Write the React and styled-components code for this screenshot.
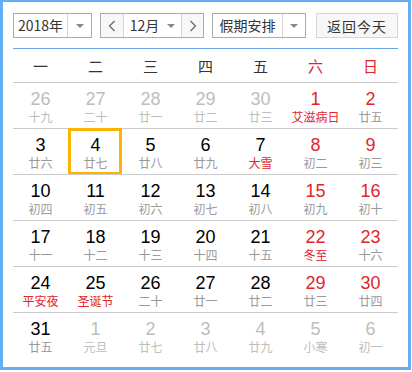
import styled, { createGlobalStyle } from 'styled-components'

const Global = createGlobalStyle`
  body { margin: 0; background: #fff; }
  * { box-sizing: border-box; }
`

const Frame = styled.div`
  width: 411px;
  height: 370px;
  border: 3px solid #65aef5;
  border-top-width: 2px;
  padding: 11px 10px 0 10px;
  font-family: "Liberation Sans", "Noto Sans CJK SC", sans-serif;
  background: #fff;
`

const Toolbar = styled.div`
  display: flex;
  align-items: center;
  height: 25px;
  font-family: "Noto Sans CJK SC", sans-serif;
  font-size: 14px;
  color: #333;
`

const Box = styled.div`
  display: flex;
  height: 25px;
  width: ${p => p.$w}px;
  margin-left: ${p => p.$ml || 0}px;
  border: 1px solid #aaa;
  background: #fff;
`

const Label = styled.div`
  flex: 1;
  display: flex;
  align-items: center;
  justify-content: center;
  gap: 8px;
  line-height: 23px;
`

const ArrowCell = styled.div`
  width: ${p => p.$w}px;
  display: flex;
  align-items: center;
  justify-content: center;
  border-left: 1px solid #d4d4d4;
  border-right: ${p => (p.$edge ? '1px solid #d4d4d4' : 'none')};
  background: ${p => (p.$shade ? '#f7f7f7' : '#fff')};
`

const Caret = styled.span`
  width: 0;
  height: 0;
  border-left: 4px solid transparent;
  border-right: 4px solid transparent;
  border-top: 4px solid #888;
`

const TodayButton = styled.div`
  margin-left: 10px;
  width: 82px;
  height: 25px;
  border: 1px solid #d6d6d6;
  background: #f7f7f7;
  display: flex;
  align-items: center;
  justify-content: center;
  letter-spacing: 1px;
`

const BlueRule = styled.div`
  height: 1px;
  background: #67a7e8;
  margin-top: 10px;
`

const Grid = styled.div`
  display: grid;
  grid-template-columns: repeat(7, 55px);
`

const Head = styled.div`
  height: 33px;
  display: flex;
  align-items: center;
  justify-content: center;
  font-family: "Noto Sans CJK SC", sans-serif;
  font-size: 15px;
  color: ${p => (p.$red ? '#d9262c' : '#333')};
`

const Cell = styled.div`
  position: relative;
  height: 46px;
  border-top: 1px solid #cacaca;
  padding-top: 6px;
  text-align: center;

  ${p =>
    p.$today &&
    `&::after {
      content: '';
      position: absolute;
      left: 0;
      right: 1px;
      top: -1px;
      bottom: -1px;
      border: 3px solid #fbb400;
    }`}
`

const Num = styled.div`
  font-size: 18px;
  line-height: 20px;
  color: ${p => p.$c};
`

const Lunar = styled.div`
  margin-top: 1px;
  font-family: "Noto Sans CJK SC", sans-serif;
  font-size: 12px;
  line-height: 14px;
  color: ${p => p.$c};
`

const Chevron = ({ dir }) => (
  <svg width="8" height="12" viewBox="0 0 8 12">
    <polyline
      points={dir === 'l' ? '6.5,1 1.5,6 6.5,11' : '1.5,1 6.5,6 1.5,11'}
      fill="none"
      stroke="#666"
      strokeWidth="1.2"
    />
  </svg>
)

const weeks = [
  [['26', '十九', 'o'], ['27', '二十', 'o'], ['28', '廿一', 'o'], ['29', '廿二', 'o'], ['30', '廿三', 'o'], ['1', '艾滋病日', 'w', 1], ['2', '廿五', 'w']],
  [['3', '廿六'], ['4', '廿七', '', 0, 1], ['5', '廿八'], ['6', '廿九'], ['7', '大雪', '', 1], ['8', '初二', 'w'], ['9', '初三', 'w']],
  [['10', '初四'], ['11', '初五'], ['12', '初六'], ['13', '初七'], ['14', '初八'], ['15', '初九', 'w'], ['16', '初十', 'w']],
  [['17', '十一'], ['18', '十二'], ['19', '十三'], ['20', '十四'], ['21', '十五'], ['22', '冬至', 'w', 1], ['23', '十六', 'w']],
  [['24', '平安夜', '', 1], ['25', '圣诞节', '', 1], ['26', '二十'], ['27', '廿一'], ['28', '廿二'], ['29', '廿三', 'w'], ['30', '廿四', 'w']],
  [['31', '廿五'], ['1', '元旦', 'o'], ['2', '廿七', 'o'], ['3', '廿八', 'o'], ['4', '廿九', 'o'], ['5', '小寒', 'o'], ['6', '初一', 'o']],
]

const numColor = kind => (kind === 'o' ? '#bdbdbd' : kind === 'w' ? '#e0262c' : '#000')
const lunarColor = (kind, fest) => (kind === 'o' ? '#bdbdbd' : fest ? '#e0262c' : '#999')

export default function App() {
  return (
    <>
      <Global />
      <Frame>
        <Toolbar>
          <Box $w={79}>
            <Label>2018年</Label>
            <ArrowCell $w={24}><Caret /></ArrowCell>
          </Box>
          <Box $w={104} $ml={8}>
            <ArrowCell $w={22} $shade style={{ borderLeft: 'none' }}><Chevron dir="l" /></ArrowCell>
            <Label style={{ borderLeft: '1px solid #d4d4d4' }}>12月<Caret /></Label>
            <ArrowCell $w={22} $shade><Chevron dir="r" /></ArrowCell>
          </Box>
          <Box $w={94} $ml={8}>
            <Label>假期安排</Label>
            <ArrowCell $w={23}><Caret /></ArrowCell>
          </Box>
          <TodayButton>返回今天</TodayButton>
        </Toolbar>
        <BlueRule />
        <Grid>
          {['一', '二', '三', '四', '五', '六', '日'].map((d, i) => (
            <Head key={d} $red={i > 4}>{d}</Head>
          ))}
          {weeks.flat().map(([n, l, kind, fest, today], i) => (
            <Cell key={i} $today={today}>
              <Num $c={numColor(kind)}>{n}</Num>
              <Lunar $c={lunarColor(kind, fest)}>{l}</Lunar>
            </Cell>
          ))}
        </Grid>
      </Frame>
    </>
  )
}
